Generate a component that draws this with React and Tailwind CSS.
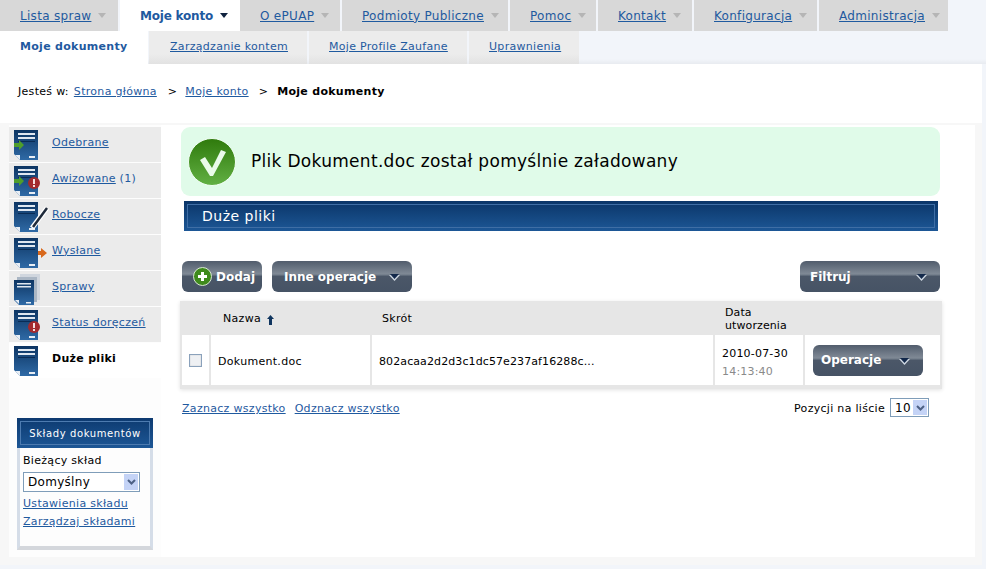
import React from "react";

const font = { fontFamily: '"DejaVu Sans", Verdana, sans-serif' };

const topTabs = [
  { label: "Lista spraw", w: "w-[118px]" },
  { label: "Moje konto", w: "w-[120px] -mr-[2px]", active: true },
  { label: "O ePUAP", w: "w-[100px]" },
  { label: "Podmioty Publiczne", w: "w-[166px]" },
  { label: "Pomoc", w: "w-[86px]" },
  { label: "Kontakt", w: "w-[94px]" },
  { label: "Konfiguracja", w: "w-[123px]" },
  { label: "Administracja", w: "w-[129px]" },
];

const subTabs = [
  { label: "Moje dokumenty", w: "w-[148px] pl-[20px]", active: true },
  { label: "Zarządzanie kontem", w: "w-[158px] ml-[1px] pl-[21px]" },
  { label: "Moje Profile Zaufane", w: "w-[158px] ml-[2px] pl-[20px]" },
  { label: "Uprawnienia", w: "w-[110px] ml-[2px] pl-[20px]" },
];

const sideItems = [
  { label: "Odebrane", icon: "in" },
  { label: "Awizowane", extra: " (1)", icon: "inAlert" },
  { label: "Robocze", icon: "pen" },
  { label: "Wysłane", icon: "out" },
  { label: "Sprawy", icon: "stack" },
  { label: "Status doręczeń", icon: "alert" },
  { label: "Duże pliki", icon: "plain", active: true },
];

const Caret = ({ color = "#b5b5b5" }) => (
  <svg width="8" height="5" viewBox="0 0 8 5">
    <path d="M0 0h8L4 5z" fill={color} />
  </svg>
);

const ButtonCaret = () => (
  <svg width="11" height="7" viewBox="0 0 11 7" className="mt-[2px]">
    <path d="M0 1h11L5.5 7z" fill="#cfd8e2" />
    <path d="M1 0h9L5.5 5z" fill="#12284a" />
  </svg>
);

const DocIcon = ({ kind, id }) => (
  <svg width="36" height="34" viewBox="0 0 36 34" className="shrink-0">
    <defs>
      <linearGradient id={id} x1="0" y1="0" x2="0" y2="1">
        <stop offset="0" stopColor="#0d3563" />
        <stop offset="1" stopColor="#2f6aa6" />
      </linearGradient>
    </defs>
    {kind === "stack" ? (
      <>
        <rect x="6" y="2" width="20" height="26" fill="#d0d6de" />
        <rect x="3" y="5" width="20" height="25" fill="#aab6c4" />
        <path d="M0 8h20v25H5l-5-5z" fill={`url(#${id})`} />
        <path d="M3 11h14v1.500H3zM3 14h14v1.500H3z" fill="#dfe7f0" />
        <path d="M12 30h5v1.500h-5z" fill="#e8eef5" />
        <path d="M1 28l4 4v-4z" fill="#e8eef5" />
      </>
    ) : (
      <>
        <path d="M0 2h24v30H6l-6-6z" fill={`url(#${id})`} />
        <path d="M4 5h17v2H4zM4 9h17v2H4z" fill="#dfe7f0" />
        <path d="M4 13h17v1H4z" fill="#0a2c55" />
        <path d="M15 28h6v2h-6z" fill="#e8eef5" />
        <path d="M1 27l5 5v-5z" fill="#e8eef5" />
      </>
    )}
    {(kind === "in" || kind === "inAlert") && <path d="M0 15h5v-3l5 5-5 5v-3H0z" fill="#4f9e2c" />}
    {(kind === "inAlert" || kind === "alert") && (
      <>
        <circle cx="20" cy="19" r="6" fill="#a32a2e" />
        <path d="M19 15h2v5h-2zM19 21h2v2h-2z" fill="#f3dede" />
      </>
    )}
    {kind === "pen" && (
      <>
        <path d="M18 28L33 8" stroke="#fff" strokeWidth="5" />
        <path d="M19 27L33 8" stroke="#1f2a3a" strokeWidth="2.500" />
      </>
    )}
    {kind === "out" && <path d="M24 15h3v-3l6 5-6 5v-3h-3z" fill="#d8681c" />}
  </svg>
);

const DarkButton = ({ label, w, pl, mr, plus }) => (
  <button
    className={`${w} h-[31px] rounded-[6px] flex items-center justify-between bg-[linear-gradient(#515c6c_0%,#808a96_42%,#4b5768_50%,#465365_100%)] text-white text-[12px] font-bold`}
  >
    {plus ? (
      <span className="flex items-center gap-[4px] pl-[11px]">
        <svg width="19" height="19" viewBox="0 0 19 19">
          <circle cx="9.500" cy="9.500" r="9" fill="#3f8a1c" stroke="#d7e8cf" strokeWidth="1" />
          <path d="M8 5h3v3h3v3h-3v3H8v-3H5V8h3z" fill="#fff" />
        </svg>
        {label}
      </span>
    ) : (
      <>
        <span className={pl}>{label}</span>
        <span className={mr}>
          <ButtonCaret />
        </span>
      </>
    )}
  </button>
);

const FakeSelect = ({ value, w, h }) => (
  <div className={`${w} ${h} flex items-center justify-between border border-[#7f9db9] bg-white text-[12px] pl-[4px] text-black`}>
    <span>{value}</span>
    <span className="h-full w-[16px] flex items-center justify-center bg-[#c4d3f6] border border-white">
      <svg width="9" height="6" viewBox="0 0 9 6">
        <path d="M1 1l3.500 3.500L8 1" fill="none" stroke="#4d6185" strokeWidth="2" />
      </svg>
    </span>
  </div>
);

const linkCls = "text-[#1f5a9f] underline";

export default function App() {
  return (
    <div style={font} className="w-[986px] h-[569px] overflow-hidden bg-[#f2f5fa] text-[11px] tracking-[0.3px] text-black">
      {/* top menu */}
      <div className="flex gap-[2px] h-[31px]">
        {topTabs.map((t) => (
          <div
            key={t.label}
            className={`${t.w} h-full flex items-center gap-[7px] pl-[20px] text-[12px] shrink-0 ${t.active ? "bg-white font-bold text-[#1f5a9f] tracking-[-0.2px]" : "bg-[#d8d8d8]"}`}
          >
            <span className={t.active ? "" : linkCls}>{t.label}</span>
            <Caret color={t.active ? "#10233f" : "#b5b5b5"} />
          </div>
        ))}
      </div>

      {/* sub menu */}
      <div className="flex h-[33px] bg-[linear-gradient(#f2f5fa_85%,#e8ebf0_100%)]">
        {subTabs.map((t) => (
          <div
            key={t.label}
            className={`${t.w} h-full flex items-center shrink-0 ${t.active ? "bg-white font-bold text-[#1f5a9f]" : "bg-[linear-gradient(#ececec_70%,#e2e2e2_100%)]"}`}
          >
            <span className={t.active ? "" : linkCls}>{t.label}</span>
          </div>
        ))}
      </div>

      {/* page */}
      <div className="w-[982px] h-[501px] bg-white">
        <div className="h-[59px] flex items-center pl-[18px] pb-[2px]">
          <span>Jesteś w:</span>
          <span className={`${linkCls} ml-[5px]`}>Strona główna</span>
          <span className="ml-[11px]">&gt;</span>
          <span className={`${linkCls} ml-[8px]`}>Moje konto</span>
          <span className="ml-[10px]">&gt;</span>
          <span className="font-bold ml-[9px]">Moje dokumenty</span>
        </div>

        <div className="h-[442px] bg-[#f7f7f7] pl-[9px] pr-[7px] pt-[2px] pb-[8px]">
          <div className="h-full flex bg-white">
            {/* sidebar */}
            <div className="w-[152px] shrink-0 pt-[2px] bg-[#fdfdfd]">
              <div className="flex flex-col gap-[1px]">
                {sideItems.map((s) => (
                  <div
                    key={s.label}
                    className={`h-[35px] flex items-center pl-[5px] ${s.active ? "bg-white font-bold" : "bg-[#ebebeb]"}`}
                  >
                    <DocIcon kind={s.icon} id={`doc-${s.icon}`} />
                    <span className="ml-[2px] -mt-[3px]">
                      <span className={s.active ? "" : linkCls}>{s.label}</span>
                      {s.extra && <span className="text-[#1f5a9f]">{s.extra}</span>}
                    </span>
                  </div>
                ))}
              </div>

              <div className="mt-[40px] ml-[8px] w-[136px] h-[132px] flex flex-col">
                <div className="h-[30px] p-[3px] bg-[linear-gradient(#0d3a70,#1d5796)]">
                  <div className="h-full flex items-center justify-center border border-[#4d7bb0] text-white text-[10px] tracking-[0.6px]">
                    Składy dokumentów
                  </div>
                </div>
                <div className="flex-1 border-x-[3px] border-b-[4px] border-[#d5dde8] border-b-[#d4d7dc] px-[3px] pt-[6px]">
                  <div className="leading-[14px]">Bieżący skład</div>
                  <div className="mt-[4px]">
                    <FakeSelect value="Domyślny" w="w-[117px]" h="h-[20px]" />
                  </div>
                  <div className={`${linkCls} mt-[5px] leading-[14px]`}>Ustawienia składu</div>
                  <div className={`${linkCls} mt-[4px] leading-[14px]`}>Zarządzaj składami</div>
                </div>
              </div>
            </div>

            {/* main */}
            <div className="flex-1 pl-[20px] pt-[2px]">
              <div className="w-[759px] h-[69px] rounded-[9px] bg-[#e0fbe9] flex items-center pl-[7px] gap-[15px]">
                <svg width="48" height="48" viewBox="0 0 48 48">
                  <defs>
                    <linearGradient id="okGrad" x1="0" y1="0" x2="0" y2="1">
                      <stop offset="0" stopColor="#2f7a0c" />
                      <stop offset="1" stopColor="#62b044" />
                    </linearGradient>
                  </defs>
                  <circle cx="24" cy="24" r="23.500" fill="url(#okGrad)" stroke="#f0fff4" strokeWidth="1" />
                  <path d="M12 22l5-3 7 11 9-18 5 2-13 24h-3z" fill="#eafbea" />
                </svg>
                <span className="text-[17px]">Plik Dokument.doc został pomyślnie załadowany</span>
              </div>

              <div className="ml-[3px] mt-[5px] w-[754px] h-[30px] p-[3px] bg-[linear-gradient(#0a3568,#1d5796)]">
                <div className="h-full flex items-center border border-[#3f6ea5] pl-[14px] text-white text-[14px] tracking-[0.5px]">
                  Duże pliki
                </div>
              </div>

              <div className="mt-[30px] ml-[1px] w-[758px] flex items-center tracking-normal">
                <DarkButton label="Dodaj" w="w-[80px]" plus />
                <div className="ml-[10px]">
                  <DarkButton label="Inne operacje" w="w-[140px]" pl="pl-[12px]" mr="mr-[12px]" />
                </div>
                <div className="ml-auto">
                  <DarkButton label="Filtruj" w="w-[140px]" pl="pl-[10px]" mr="mr-[13px]" />
                </div>
              </div>

              <div className="mt-[9px] -ml-[1px] w-[762px] bg-[#e6e6e6] px-[2px] pb-[4px] shadow-[0_1px_4px_rgba(0,0,0,0.12)]">
                <div className="h-[34px] flex items-center">
                  <div className="w-[29px]" />
                  <div className="w-[161px] pl-[12px] flex items-center gap-[6px] mt-[3px]">
                    Nazwa
                    <svg width="7" height="10" viewBox="0 0 7 10">
                      <path d="M3.500 0L7 4H5v6H2V4H0z" fill="#10355f" />
                    </svg>
                  </div>
                  <div className="w-[343px] pl-[10px] mt-[2px]">Skrót</div>
                  <div className="w-[90px] pl-[10px] leading-[13px] mt-[2px] tracking-[0.1px]">
                    Data
                    <br />
                    utworzenia
                  </div>
                </div>
                <div className="h-[50px] flex gap-[2px]">
                  <div className="w-[27px] bg-white flex items-center justify-center">
                    <span className="w-[13px] h-[13px] border border-[#8aa1bb] bg-[#eef0f3] shadow-[inset_0_0_1px_#999]" />
                  </div>
                  <div className="w-[159px] bg-white flex items-center pl-[7px] pt-[4px]">Dokument.doc</div>
                  <div className="w-[341px] bg-white flex items-center pl-[7px] pt-[4px] tracking-[0.1px]">802acaa2d2d3c1dc57e237af16288c...</div>
                  <div className="w-[88px] bg-white flex flex-col justify-center pl-[7px] pt-[4px] gap-[5px] leading-[13px] tracking-[0.2px]">
                    <span>2010-07-30</span>
                    <span className="text-[#8a8a8a]">14:13:40</span>
                  </div>
                  <div className="flex-1 bg-white flex items-center pl-[8px] tracking-normal">
                    <DarkButton label="Operacje" w="w-[110px]" pl="pl-[8px]" mr="mr-[13px]" />
                  </div>
                </div>
              </div>

              <div className="mt-[9px] ml-[1px] w-[747px] flex items-start justify-between">
                <div className="flex gap-[9px] mt-[3px]">
                  <span className={linkCls}>Zaznacz wszystko</span>
                  <span className={linkCls}>Odznacz wszystko</span>
                </div>
                <div className="flex items-center gap-[5px]">
                  <span className="mt-[3px]">Pozycji na liście</span>
                  <FakeSelect value="10" w="w-[39px]" h="h-[19px]" />
                </div>
              </div>
            </div>
          </div>
        </div>
      </div>
    </div>
  );
}
